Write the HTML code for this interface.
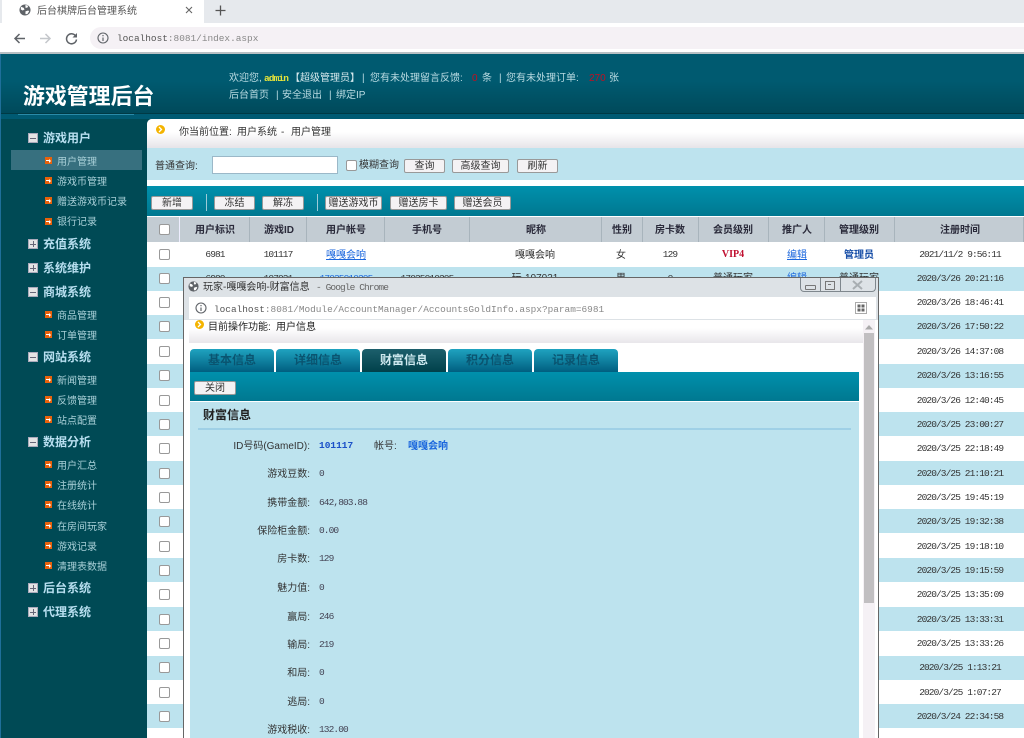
<!DOCTYPE html>
<html lang="zh-CN">
<head>
<meta charset="utf-8">
<title>后台棋牌后台管理系统</title>
<style>
html,body{margin:0;padding:0;width:1024px;height:738px;overflow:hidden;background:#004a55}
#w{position:relative;width:1024px;height:738px;overflow:hidden;font-family:"Liberation Sans","WenQuanYi Zen Hei","Noto Sans CJK SC",sans-serif;font-size:10px;color:#333;filter:blur(.3px)}
#w div{position:absolute}
.t{position:absolute;white-space:nowrap;line-height:12px;height:12px}
.c{transform:translateX(-50%)}
.m{font-family:"Liberation Mono","WenQuanYi Zen Hei",monospace;font-size:9.5px;letter-spacing:-.9px}
.u{font-family:"Liberation Mono",monospace;font-size:9.44px;color:#555}
.side{color:#a9d0d8;left:57px}
.g{color:#b8dff0;font-weight:bold;font-size:12px;left:43px;line-height:14px;height:14px}
.o{position:absolute;left:45px;width:7px;height:7px;background:#e8620c}
.o:after{content:"";position:absolute;left:1px;top:3px;width:3px;height:1px;background:#fff}
.o:before{content:"";position:absolute;left:4px;top:1.5px;border-left:2.5px solid #fff;border-top:2px solid transparent;border-bottom:2px solid transparent}
.b{position:absolute;left:28px;width:8px;height:8px;background:#e4e4e4;border:1px solid #aab}
.b:after{content:"";position:absolute;left:1px;top:3.5px;width:6px;height:1px;background:#667}
.p:before{content:"";position:absolute;left:3.5px;top:1px;width:1px;height:6px;background:#667}
.btn{position:absolute;box-sizing:border-box;height:14px;background:#f4f2f4;border:1px solid #999;border-radius:2px;text-align:center;line-height:13px;font-size:10px;color:#333;white-space:nowrap}
.cb{position:absolute;box-sizing:border-box;width:11px;height:11px;background:#fff;border:1px solid #999;border-radius:2px}
.r{position:absolute;left:147px;width:877px;height:24.3px}
.e{background:#bde3ee}
.h{top:217px;height:25px;background:#c3ccd3;border-right:1px solid #a8b4bc;box-sizing:border-box}
.th{top:225px;font-weight:bold;color:#2a2a3a}
.lb{position:absolute;right:714px;white-space:nowrap;line-height:12px;height:12px;color:#333}
.v{left:319px;color:#445}
.tab{position:absolute;top:349px;width:84px;height:23px;border-radius:4px 4px 0 0;background:linear-gradient(#1fa3c0,#005f80);text-align:center;line-height:23px;font-size:12px;font-weight:bold;color:#0a5470}
.tm{color:#333;left:960px}
</style>
</head>
<body>
<div id="w">
  <!-- browser chrome -->
  <div style="left:0;top:0;width:1024px;height:23px;background:#e6e9ed"></div>
  <div style="left:2px;top:0;width:202px;height:23px;background:#fff"></div>
  <svg style="position:absolute;left:19px;top:4px" width="12" height="12" viewBox="0 0 13 13"><circle cx="6.5" cy="6.5" r="6" fill="#5f6368"/><path d="M2 3l3 1 1 2-2 1-2-1zM7 1l3 1-1 2-2 0zM7 8l3-1 1 1-2 3-2 0z" fill="#fff"/></svg>
  <span class="t" style="left:37px;top:6px;color:#555">后台棋牌后台管理系统</span>
  <svg style="position:absolute;left:185px;top:6px" width="8" height="8"><path d="M1 1l6 6M7 1l-6 6" stroke="#666" stroke-width="1.1"/></svg>
  <svg style="position:absolute;left:215px;top:5px" width="11" height="11"><path d="M5.5 .5v10M.5 5.5h10" stroke="#555" stroke-width="1.3"/></svg>
  <div style="left:0;top:23px;width:1024px;height:30px;background:#fff"></div>
  <svg style="position:absolute;left:13px;top:32px" width="13" height="13"><path d="M12 6.5H2M6.5 2L2 6.5 6.5 11" fill="none" stroke="#5f6368" stroke-width="1.5"/></svg>
  <svg style="position:absolute;left:39px;top:32px" width="13" height="13"><path d="M1 6.5h10M6.5 2L11 6.5 6.5 11" fill="none" stroke="#c4c7cb" stroke-width="1.5"/></svg>
  <svg style="position:absolute;left:65px;top:32px" width="13" height="13"><path d="M11 4.5A5 5 0 1 0 11.5 7.5" fill="none" stroke="#5f6368" stroke-width="1.5"/><path d="M12 1v4.5H7.5z" fill="#5f6368"/></svg>
  <div style="left:90px;top:27px;width:934px;height:22px;background:#f5f1f5;border-radius:11px 0 0 11px"></div>
  <svg style="position:absolute;left:97px;top:32px" width="12" height="12"><circle cx="6" cy="6" r="5" fill="none" stroke="#5f6368" stroke-width="1.1"/><path d="M6 5.5v3.5M6 3v1.3" stroke="#5f6368" stroke-width="1.2"/></svg>
  <span class="t u" style="left:117px;top:33px">localhost<span style="color:#888">:8081/index.aspx</span></span>
  <div style="left:0;top:52px;width:1024px;height:2px;background:#b8c0c4"></div>

  <!-- header -->
  <div style="left:0;top:54px;width:1024px;height:60px;background:linear-gradient(#005a70,#005a70 45%,#00495a)"></div>
  <div style="left:0;top:113px;width:1024px;height:1px;background:#003a45"></div>
  <div style="left:0;top:114px;width:1024px;height:5px;background:#005a72"></div>
  <div style="left:0;top:119px;width:147px;height:619px;background:#004a55"></div>
  <div style="left:0;top:54px;width:1px;height:684px;background:#1f6f9a"></div>
  <div style="left:18px;top:114px;width:116px;height:1px;background:#2a8aa8"></div>
  <span class="t" style="left:23px;top:84px;height:25px;line-height:25px;font-size:21.9px;font-weight:bold;color:#fff">游戏管理后台</span>

  <span class="t" style="left:229px;top:73px;color:#b9dbe2">欢迎您,</span>
  <span class="t m" style="left:264px;top:73px;color:#e6e43a;font-weight:bold">admin</span>
  <span class="t" style="left:290px;top:73px;color:#d5e8ec">【超级管理员】</span>
  <span class="t" style="left:362px;top:73px;color:#b9dbe2">|</span>
  <span class="t" style="left:370px;top:73px;color:#b9dbe2">您有未处理留言反馈:</span>
  <span class="t" style="left:472px;top:73px;color:#c01020">0</span>
  <span class="t" style="left:482px;top:73px;color:#b9dbe2">条</span>
  <span class="t" style="left:499px;top:73px;color:#b9dbe2">|</span>
  <span class="t" style="left:506px;top:73px;color:#b9dbe2">您有未处理订单:</span>
  <span class="t" style="left:589px;top:73px;color:#c01020">270</span>
  <span class="t" style="left:609px;top:73px;color:#b9dbe2">张</span>
  <span class="t" style="left:229px;top:90px;color:#b9dbe2">后台首页</span>
  <span class="t" style="left:276px;top:90px;color:#b9dbe2">|</span>
  <span class="t" style="left:282px;top:90px;color:#b9dbe2">安全退出</span>
  <span class="t" style="left:329px;top:90px;color:#b9dbe2">|</span>
  <span class="t" style="left:336px;top:90px;color:#b9dbe2">绑定IP</span>

  <!-- sidebar -->
  <div style="left:11px;top:150px;width:131px;height:20px;background:#37707f"></div>
  <span class="b" style="top:133px"></span><span class="t g" style="top:131px">游戏用户</span>
  <span class="o" style="top:157px"></span><span class="t side" style="top:157px">用户管理</span>
  <span class="o" style="top:177px"></span><span class="t side" style="top:177px">游戏币管理</span>
  <span class="o" style="top:197px"></span><span class="t side" style="top:197px">赠送游戏币记录</span>
  <span class="o" style="top:218px"></span><span class="t side" style="top:217px">银行记录</span>
  <span class="b p" style="top:239px"></span><span class="t g" style="top:237px">充值系统</span>
  <span class="b p" style="top:263px"></span><span class="t g" style="top:261px">系统维护</span>
  <span class="b" style="top:287px"></span><span class="t g" style="top:285px">商城系统</span>
  <span class="o" style="top:311px"></span><span class="t side" style="top:311px">商品管理</span>
  <span class="o" style="top:331px"></span><span class="t side" style="top:331px">订单管理</span>
  <span class="b" style="top:352px"></span><span class="t g" style="top:350px">网站系统</span>
  <span class="o" style="top:376px"></span><span class="t side" style="top:376px">新闻管理</span>
  <span class="o" style="top:396px"></span><span class="t side" style="top:396px">反馈管理</span>
  <span class="o" style="top:416px"></span><span class="t side" style="top:416px">站点配置</span>
  <span class="b" style="top:437px"></span><span class="t g" style="top:435px">数据分析</span>
  <span class="o" style="top:461px"></span><span class="t side" style="top:461px">用户汇总</span>
  <span class="o" style="top:481px"></span><span class="t side" style="top:481px">注册统计</span>
  <span class="o" style="top:501px"></span><span class="t side" style="top:501px">在线统计</span>
  <span class="o" style="top:522px"></span><span class="t side" style="top:522px">在房间玩家</span>
  <span class="o" style="top:542px"></span><span class="t side" style="top:542px">游戏记录</span>
  <span class="o" style="top:562px"></span><span class="t side" style="top:562px">清理表数据</span>
  <span class="b p" style="top:583px"></span><span class="t g" style="top:581px">后台系统</span>
  <span class="b p" style="top:607px"></span><span class="t g" style="top:605px">代理系统</span>

  <!-- main content -->
  <div style="left:147px;top:119px;width:877px;height:619px;background:#fff;border-radius:5px 0 0 0"></div>
  <div style="left:147px;top:119px;width:877px;height:29px;background:linear-gradient(#fff,#fff 45%,#e6e4e8);border-radius:5px 0 0 0"></div>
  <svg style="position:absolute;left:156px;top:125px" width="9" height="9"><circle cx="4.5" cy="4.5" r="4.5" fill="#f4b400"/><path d="M3 2l2.5 2.5L3 7" fill="none" stroke="#fff" stroke-width="1.3"/></svg>
  <span class="t" style="left:179px;top:127px;color:#333">你当前位置:</span>
  <span class="t" style="left:237px;top:127px;color:#333">用户系统</span>
  <span class="t" style="left:281px;top:127px;color:#333">-</span>
  <span class="t" style="left:291px;top:127px;color:#333">用户管理</span>
  <div style="left:147px;top:148px;width:877px;height:32px;background:#bde3ee"></div>
  <span class="t" style="left:155px;top:161px;color:#333">普通查询:</span>
  <div style="left:212px;top:156px;width:124px;height:16px;background:#fff;border:1px solid #9bb8c8"></div>
  <span class="cb" style="left:346px;top:160px"></span>
  <span class="t" style="left:359px;top:160px">模糊查询</span>
  <span class="btn" style="left:404px;top:159px;width:41px">查询</span>
  <span class="btn" style="left:452px;top:159px;width:57px">高级查询</span>
  <span class="btn" style="left:517px;top:159px;width:41px">刷新</span>

  <div style="left:147px;top:186px;width:877px;height:30px;background:linear-gradient(#0090ac,#007890)"></div>
  <span class="btn" style="left:151px;top:196px;width:42px">新增</span>
  <div style="left:206px;top:194px;width:1px;height:17px;background:#9ccbd8"></div>
  <span class="btn" style="left:214px;top:196px;width:41px">冻结</span>
  <span class="btn" style="left:262px;top:196px;width:42px">解冻</span>
  <div style="left:317px;top:194px;width:1px;height:17px;background:#9ccbd8"></div>
  <span class="btn" style="left:325px;top:196px;width:57px">赠送游戏币</span>
  <span class="btn" style="left:390px;top:196px;width:57px">赠送房卡</span>
  <span class="btn" style="left:454px;top:196px;width:57px">赠送会员</span>

  <!-- table header -->
  <div class="h" style="left:147px;width:33px;border-right-color:#eef"></div>
  <div class="h" style="left:180px;width:70px"></div>
  <div class="h" style="left:250px;width:57px"></div>
  <div class="h" style="left:307px;width:78px"></div>
  <div class="h" style="left:385px;width:85px"></div>
  <div class="h" style="left:470px;width:132px"></div>
  <div class="h" style="left:602px;width:41px"></div>
  <div class="h" style="left:643px;width:56px"></div>
  <div class="h" style="left:699px;width:70px"></div>
  <div class="h" style="left:769px;width:56px"></div>
  <div class="h" style="left:825px;width:70px"></div>
  <div class="h" style="left:895px;width:129px"></div>
  <span class="cb" style="left:159px;top:224px"></span>
  <span class="t c th" style="left:215px">用户标识</span>
  <span class="t c th" style="left:279px">游戏ID</span>
  <span class="t c th" style="left:346px">用户帐号</span>
  <span class="t c th" style="left:427px">手机号</span>
  <span class="t c th" style="left:536px">昵称</span>
  <span class="t c th" style="left:622px">性别</span>
  <span class="t c th" style="left:670px">房卡数</span>
  <span class="t c th" style="left:733px">会员级别</span>
  <span class="t c th" style="left:797px">推广人</span>
  <span class="t c th" style="left:859px">管理级别</span>
  <span class="t c th" style="left:960px">注册时间</span>

  <!-- rows -->
  <div class="r e" style="top:266.5px"></div>
  <div class="r e" style="top:315px"></div>
  <div class="r e" style="top:363.5px"></div>
  <div class="r e" style="top:412px"></div>
  <div class="r e" style="top:461px"></div>
  <div class="r e" style="top:509px"></div>
  <div class="r e" style="top:558px"></div>
  <div class="r e" style="top:607px"></div>
  <div class="r e" style="top:656px"></div>
  <div class="r e" style="top:704px"></div>

  <span class="cb" style="left:159px;top:249px"></span>
  <span class="cb" style="left:159px;top:273px"></span>
  <span class="cb" style="left:159px;top:297px"></span>
  <span class="cb" style="left:159px;top:321px"></span>
  <span class="cb" style="left:159px;top:346px"></span>
  <span class="cb" style="left:159px;top:370px"></span>
  <span class="cb" style="left:159px;top:395px"></span>
  <span class="cb" style="left:159px;top:419px"></span>
  <span class="cb" style="left:159px;top:443px"></span>
  <span class="cb" style="left:159px;top:468px"></span>
  <span class="cb" style="left:159px;top:492px"></span>
  <span class="cb" style="left:159px;top:516px"></span>
  <span class="cb" style="left:159px;top:541px"></span>
  <span class="cb" style="left:159px;top:565px"></span>
  <span class="cb" style="left:159px;top:589px"></span>
  <span class="cb" style="left:159px;top:614px"></span>
  <span class="cb" style="left:159px;top:638px"></span>
  <span class="cb" style="left:159px;top:662px"></span>
  <span class="cb" style="left:159px;top:687px"></span>
  <span class="cb" style="left:159px;top:711px"></span>

  <span class="t c m" style="left:215px;top:249px">6981</span>
  <span class="t c m" style="left:278px;top:249px">101117</span>
  <span class="t c" style="left:346px;top:250px;color:#1a66dd;text-decoration:underline">嘎嘎会响</span>
  <span class="t c" style="left:535px;top:250px">嘎嘎会响</span>
  <span class="t c" style="left:621px;top:250px">女</span>
  <span class="t c m" style="left:670px;top:249px">129</span>
  <span class="t c" style="left:733px;top:249px;color:#c01030;font-weight:bold;font-family:'Liberation Serif',serif">VIP4</span>
  <span class="t c" style="left:797px;top:250px;color:#1a66dd;text-decoration:underline">编辑</span>
  <span class="t c" style="left:859px;top:250px;color:#1a50a8;font-weight:bold">管理员</span>

  <span class="t c m" style="left:215px;top:273px">6980</span>
  <span class="t c m" style="left:278px;top:273px">107031</span>
  <span class="t c m" style="left:346px;top:273px;color:#1a66dd">17035010205</span>
  <span class="t c m" style="left:427px;top:273px">17035010205</span>
  <span class="t c" style="left:535px;top:273px">玩-107031</span>
  <span class="t c" style="left:621px;top:273px">男</span>
  <span class="t c m" style="left:670px;top:273px">0</span>
  <span class="t c" style="left:733px;top:273px">普通玩家</span>
  <span class="t c" style="left:797px;top:273px;color:#1a66dd">编辑</span>
  <span class="t c" style="left:859px;top:273px">普通玩家</span>

  <span class="t c m tm" style="top:249px">2021/11/2 9:56:11</span>
  <span class="t c m tm" style="top:273px">2020/3/26 20:21:16</span>
  <span class="t c m tm" style="top:297px">2020/3/26 18:46:41</span>
  <span class="t c m tm" style="top:321px">2020/3/26 17:50:22</span>
  <span class="t c m tm" style="top:346px">2020/3/26 14:37:08</span>
  <span class="t c m tm" style="top:370px">2020/3/26 13:16:55</span>
  <span class="t c m tm" style="top:395px">2020/3/26 12:40:45</span>
  <span class="t c m tm" style="top:419px">2020/3/25 23:00:27</span>
  <span class="t c m tm" style="top:443px">2020/3/25 22:18:49</span>
  <span class="t c m tm" style="top:468px">2020/3/25 21:10:21</span>
  <span class="t c m tm" style="top:492px">2020/3/25 19:45:19</span>
  <span class="t c m tm" style="top:516px">2020/3/25 19:32:38</span>
  <span class="t c m tm" style="top:541px">2020/3/25 19:18:10</span>
  <span class="t c m tm" style="top:565px">2020/3/25 19:15:59</span>
  <span class="t c m tm" style="top:589px">2020/3/25 13:35:09</span>
  <span class="t c m tm" style="top:614px">2020/3/25 13:33:31</span>
  <span class="t c m tm" style="top:638px">2020/3/25 13:33:26</span>
  <span class="t c m tm" style="top:662px">2020/3/25 1:13:21</span>
  <span class="t c m tm" style="top:687px">2020/3/25 1:07:27</span>
  <span class="t c m tm" style="top:711px">2020/3/24 22:34:58</span>

  <!-- popup -->
  <div style="left:183px;top:277px;width:694px;height:461px;background:#fff;border:1px solid #666;border-bottom:0"></div>
  <div style="left:184px;top:278px;width:694px;height:18px;background:#dde2e6"></div>
  <svg style="position:absolute;left:188px;top:281px" width="11" height="11" viewBox="0 0 13 13"><circle cx="6.5" cy="6.5" r="6" fill="#5f6368"/><path d="M2 3l3 1 1 2-2 1-2-1zM7 1l3 1-1 2-2 0zM7 8l3-1 1 1-2 3-2 0z" fill="#fff"/></svg>
  <span class="t" style="left:203px;top:282px;color:#333">玩家-嘎嘎会响-财富信息</span>
  <span class="t m" style="left:316px;top:282px;color:#666">- Google Chrome</span>
  <div style="left:800px;top:278px;width:74px;height:13px;border:1px solid #7f878d;border-top:0;border-radius:0 0 4px 4px"></div>
  <div style="left:820px;top:278px;width:1px;height:13px;background:#7f878d"></div>
  <div style="left:840px;top:278px;width:1px;height:13px;background:#7f878d"></div>
  <div style="left:805px;top:285px;width:9px;height:3px;border:1px solid #777;border-radius:1px"></div>
  <div style="left:825px;top:281px;width:8px;height:7px;border:1px solid #777"></div>
  <div style="left:828px;top:284px;width:3px;height:1px;background:#777"></div>
  <svg style="position:absolute;left:852px;top:280px" width="11" height="10"><path d="M1 1l9 8M10 1l-9 8" stroke="#a8aeb2" stroke-width="2"/></svg>

  <div style="left:184px;top:296px;width:694px;height:24px;background:#dde2e6"></div>
  <div style="left:189px;top:297px;width:687px;height:22px;background:#fff"></div>
  <svg style="position:absolute;left:195px;top:302px" width="12" height="12"><circle cx="6" cy="6" r="5" fill="none" stroke="#5f6368" stroke-width="1.1"/><path d="M6 5.5v3.5M6 3v1.3" stroke="#5f6368" stroke-width="1.2"/></svg>
  <span class="t u" style="left:214px;top:304px">localhost<span style="color:#888">:8081/Module/AccountManager/AccountsGoldInfo.aspx?param=6981</span></span>
  <svg style="position:absolute;left:855px;top:302px" width="12" height="12"><rect x=".5" y=".5" width="11" height="11" fill="none" stroke="#aaa"/><rect x="2.5" y="2.5" width="3" height="3" fill="#666"/><rect x="6.5" y="2.5" width="3" height="3" fill="#666"/><rect x="2.5" y="6.5" width="3" height="3" fill="#666"/><rect x="6.5" y="6.5" width="3" height="3" fill="#666"/></svg>

  <div style="left:184px;top:320px;width:693px;height:418px;background:#fff"></div>
  <div style="left:189px;top:320px;width:674px;height:23px;background:linear-gradient(#fff,#fff 35%,#e8e6ea)"></div>
  <svg style="position:absolute;left:195px;top:320px" width="9" height="9"><circle cx="4.5" cy="4.5" r="4.5" fill="#f4b400"/><path d="M3 2l2.5 2.5L3 7" fill="none" stroke="#fff" stroke-width="1.3"/></svg>
  <span class="t" style="left:208px;top:322px;color:#222">目前操作功能:</span>
  <span class="t" style="left:276px;top:322px;color:#222">用户信息</span>

  <div style="left:863px;top:320px;width:12px;height:418px;background:#f5f1f5"></div>
  <div style="left:864px;top:333px;width:10px;height:270px;background:#c1bfc1"></div>
  <svg style="position:absolute;left:865px;top:325px" width="8" height="5"><path d="M4 0L8 4.5H0z" fill="#aaa"/></svg>

  <div class="tab" style="left:190px">基本信息</div>
  <div class="tab" style="left:276px">详细信息</div>
  <div class="tab" style="left:362px;background:linear-gradient(#1c5f6c,#00404a);color:#cfeaf0">财富信息</div>
  <div class="tab" style="left:448px">积分信息</div>
  <div class="tab" style="left:534px">记录信息</div>

  <div style="left:190px;top:372px;width:669px;height:29px;background:linear-gradient(#0090ac,#007890)"></div>
  <span class="btn" style="left:194px;top:381px;width:42px">关闭</span>
  <div style="left:190px;top:402px;width:669px;height:336px;background:#bde3ee"></div>
  <span class="t" style="left:203px;top:409px;font-size:12px;font-weight:bold;color:#222">财富信息</span>
  <div style="left:198px;top:428px;width:653px;height:2px;background:#9fd0e6"></div>

  <span class="lb" style="top:441px">ID号码(GameID):</span>
  <span class="t m" style="left:319px;top:440px;color:#1a50c8;font-weight:bold;letter-spacing:0">101117</span>
  <span class="t" style="left:374px;top:441px">帐号:</span>
  <span class="t" style="left:408px;top:441px;color:#1a66dd;font-weight:bold">嘎嘎会响</span>

  <span class="lb" style="top:469px">游戏豆数:</span><span class="t m v" style="top:468px">0</span>
  <span class="lb" style="top:498px">携带金额:</span><span class="t m v" style="top:497px">642,803.88</span>
  <span class="lb" style="top:526px">保险柜金额:</span><span class="t m v" style="top:525px">0.00</span>
  <span class="lb" style="top:554px">房卡数:</span><span class="t m v" style="top:553px">129</span>
  <span class="lb" style="top:583px">魅力值:</span><span class="t m v" style="top:582px">0</span>
  <span class="lb" style="top:612px">赢局:</span><span class="t m v" style="top:611px">246</span>
  <span class="lb" style="top:640px">输局:</span><span class="t m v" style="top:639px">219</span>
  <span class="lb" style="top:668px">和局:</span><span class="t m v" style="top:667px">0</span>
  <span class="lb" style="top:697px">逃局:</span><span class="t m v" style="top:696px">0</span>
  <span class="lb" style="top:725px">游戏税收:</span><span class="t m v" style="top:724px">132.00</span>
</div>
</body>
</html>
